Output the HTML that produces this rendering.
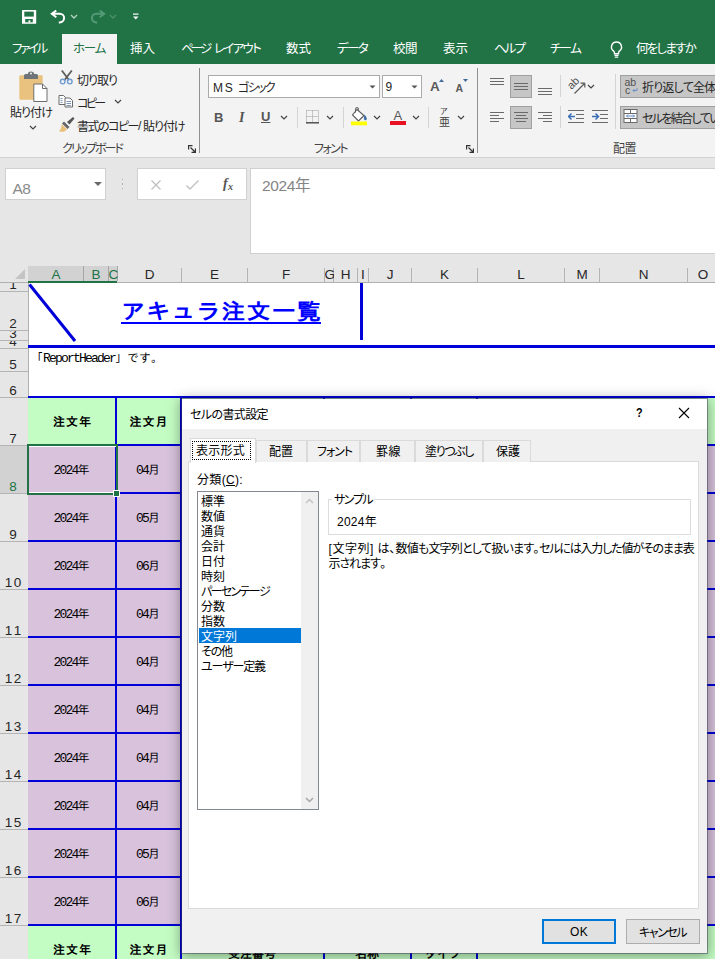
<!DOCTYPE html><html lang="ja"><head><meta charset="utf-8"><title>Excel</title><style>

html,body{margin:0;padding:0;background:#e6e6e6;}
#root{position:relative;width:715px;height:959px;overflow:hidden;font-family:"Liberation Sans","Noto Sans CJK JP",sans-serif;font-size:12px;}
#root div,#root span.t,#root svg{position:absolute;}
#root span.t{white-space:nowrap;line-height:1;font-kerning:none;font-feature-settings:"palt";}
#root span.m{font-family:"Liberation Mono","IPAGothic",monospace;font-feature-settings:normal;}
#root span.d{font-size:13px;letter-spacing:-1.800px;line-height:0;}
#root span.s{font-family:"Liberation Serif","Noto Serif CJK SC",serif;font-feature-settings:normal;}

</style></head><body><div id="root">
<div style="left:0px;top:0px;width:715px;height:64px;background:#217346;"></div>
<div style="left:62px;top:34px;width:55px;height:30px;background:#f3f3f3;"></div>
<div style="left:0px;top:64px;width:715px;height:93px;background:#f3f3f3;"></div>
<div style="left:0px;top:157px;width:715px;height:1px;background:#d2d2d2;"></div>
<span class="t" style="left:12px;top:43.2px;font-size:12.5px;color:#ffffff;letter-spacing:-2.32px;">ファイル</span>
<span class="t" style="left:130px;top:43.2px;font-size:12.5px;color:#ffffff;letter-spacing:-0.01px;">挿入</span>
<span class="t" style="left:181px;top:43.2px;font-size:12.5px;color:#ffffff;letter-spacing:-3.09px;">ページ</span>
<span class="t" style="left:214px;top:43.2px;font-size:12.5px;color:#ffffff;letter-spacing:-1.71px;">レイアウト</span>
<span class="t" style="left:286px;top:43.2px;font-size:12.5px;color:#ffffff;letter-spacing:-0.01px;">数式</span>
<span class="t" style="left:337px;top:43.2px;font-size:12.5px;color:#ffffff;letter-spacing:-1.65px;">データ</span>
<span class="t" style="left:393px;top:43.2px;font-size:12.5px;color:#ffffff;letter-spacing:-0.51px;">校閲</span>
<span class="t" style="left:443px;top:43.2px;font-size:12.5px;color:#ffffff;letter-spacing:-0.01px;">表示</span>
<span class="t" style="left:494px;top:43.2px;font-size:12.5px;color:#ffffff;letter-spacing:-1.96px;">ヘルプ</span>
<span class="t" style="left:550px;top:43.2px;font-size:12.5px;color:#ffffff;letter-spacing:-1.82px;">チーム</span>
<span class="t" style="left:636px;top:43.2px;font-size:12.5px;color:#ffffff;letter-spacing:-1.76px;">何をしますか</span>
<span class="t" style="left:73px;top:43.2px;font-size:12.5px;color:#217346;letter-spacing:-1.38px;">ホーム</span>
<svg style="left:608px;top:40px" width="17" height="19" viewBox="0 0 17 19"><path d="M8.500 2a5 5 0 0 0-2.900 9.100c.6.600.9 1.200.9 2v.600h4v-.600c0-.800.300-1.400.9-2A5 5 0 0 0 8.500 2z" fill="none" stroke="#fff" stroke-width="1.400"/><path d="M6.500 15.300h4M6.800 17.200h3.400" stroke="#fff" stroke-width="1.300"/></svg>
<svg style="left:21px;top:9px" width="16" height="16" viewBox="0 0 16 16"><rect x="1" y="1" width="14.200" height="13.800" rx="0.600" fill="#fff"/><rect x="3.300" y="2.600" width="9.500" height="5" fill="#217346"/><rect x="4.200" y="10" width="7.600" height="3.300" fill="#217346"/><rect x="7.500" y="11.300" width="1.800" height="2" fill="#fff"/></svg>
<svg style="left:50px;top:9px" width="17" height="16" viewBox="0 0 17 16"><path d="M6.300 1.500L1.800 4.800l4.500 3.400M2 4.800h7.800a4.300 4.300 0 0 1 0 8.600H8.800" fill="none" stroke="#fff" stroke-width="2"/></svg>
<svg style="left:70px;top:14px" width="8" height="6" viewBox="0 0 8 6"><path d="M1 1l3 3 3-3" fill="none" stroke="#b8d4c3" stroke-width="1.300"/></svg>
<svg style="left:89px;top:9px" width="17" height="16" viewBox="0 0 17 16"><g transform="translate(17,0) scale(-1,1)"><path d="M6.300 1.500L1.800 4.800l4.500 3.400M2 4.800h7.800a4.300 4.300 0 0 1 0 8.600H8.800" fill="none" stroke="#559a77" stroke-width="2"/></g></svg>
<svg style="left:109px;top:14px" width="8" height="6" viewBox="0 0 8 6"><path d="M1 1l3 3 3-3" fill="none" stroke="#4f8f6c" stroke-width="1.300"/></svg>
<svg style="left:132px;top:13px" width="8" height="8" viewBox="0 0 8 8"><path d="M1 1.100h5.500" stroke="#fff" stroke-width="1.200"/><path d="M1 3.600h5.500l-2.750 3z" fill="#fff"/></svg>
<div style="left:0px;top:158px;width:715px;height:108px;background:#e6e6e6;"></div>
<div style="left:5px;top:168px;width:101px;height:32px;background:#ffffff;box-sizing:border-box;border:1px solid #d0d0d0;"></div>
<span class="t" style="left:12.5px;top:180.8px;font-size:15.5px;color:#8a8a8a;letter-spacing:-0.48px;">A8</span>
<svg style="left:94px;top:182px" width="8" height="4" viewBox="0 0 8 4"><path d="M0 0h8l-4 4z" fill="#6a6a6a"/></svg>
<div style="left:121.5px;top:178.5px;width:1.5px;height:1.5px;background:#b0b0b0;"></div>
<div style="left:121.5px;top:183px;width:1.5px;height:1.5px;background:#b0b0b0;"></div>
<div style="left:121.5px;top:187.5px;width:1.5px;height:1.5px;background:#b0b0b0;"></div>
<div style="left:137px;top:168px;width:110px;height:32px;background:#ffffff;box-sizing:border-box;border:1px solid #d0d0d0;"></div>
<svg style="left:151px;top:180px" width="10" height="10" viewBox="0 0 10 10"><path d="M0.500 0.500l9 9M9.500 0.500l-9 9" stroke="#c0c0c0" stroke-width="1.300"/></svg>
<svg style="left:186px;top:180px" width="13" height="10" viewBox="0 0 13 10"><path d="M0.500 5.500l3.500 3.500L12.500 0.500" fill="none" stroke="#c0c0c0" stroke-width="1.400"/></svg>
<span class="t s" style="left:223px;top:177.0px;font-size:14px;color:#555;font-weight:700;"><i>f</i></span>
<span class="t s" style="left:228px;top:182.0px;font-size:10px;color:#555;font-weight:700;"><i>x</i></span>
<div style="left:250px;top:168px;width:466px;height:86px;background:#ffffff;box-sizing:border-box;border:1px solid #d0d0d0;"></div>
<span class="t" style="left:262px;top:177.8px;font-size:15.5px;color:#848484;letter-spacing:-0.40px;">2024年</span>
<div style="left:0px;top:266px;width:715px;height:17px;background:#e6e6e6;"></div>
<div style="left:28px;top:266px;width:89px;height:17px;background:#d2d2d2;"></div>
<div style="left:28px;top:281px;width:89px;height:2px;background:#217346;"></div>
<div style="left:0px;top:282px;width:28px;height:1px;background:#b0b0b0;"></div>
<div style="left:117px;top:282px;width:598px;height:1px;background:#b0b0b0;"></div>
<svg style="left:15px;top:269px" width="10" height="10" viewBox="0 0 10 10"><path d="M10 0v10H0z" fill="#c4c4c4"/></svg>
<div style="left:83px;top:266px;width:1px;height:15px;background:#a6a6a6;"></div>
<span class="t" style="left:28.5px;top:268.2px;font-size:13.5px;color:#217346;width:55px;text-align:center;overflow:hidden;">A</span>
<div style="left:108px;top:266px;width:1px;height:15px;background:#a6a6a6;"></div>
<span class="t" style="left:83.5px;top:268.2px;font-size:13.5px;color:#217346;width:25px;text-align:center;overflow:hidden;">B</span>
<div style="left:117px;top:266px;width:1px;height:15px;background:#a6a6a6;"></div>
<span class="t" style="left:108.5px;top:268.2px;font-size:13.5px;color:#217346;width:9px;text-align:center;overflow:hidden;">C</span>
<div style="left:181px;top:268px;width:1px;height:14px;background:#b4b4b4;"></div>
<span class="t" style="left:117.5px;top:268.2px;font-size:13.5px;color:#262626;width:64px;text-align:center;overflow:hidden;">D</span>
<div style="left:247px;top:268px;width:1px;height:14px;background:#b4b4b4;"></div>
<span class="t" style="left:181.5px;top:268.2px;font-size:13.5px;color:#262626;width:66px;text-align:center;overflow:hidden;">E</span>
<div style="left:324px;top:268px;width:1px;height:14px;background:#b4b4b4;"></div>
<span class="t" style="left:247.5px;top:268.2px;font-size:13.5px;color:#262626;width:77px;text-align:center;overflow:hidden;">F</span>
<div style="left:333px;top:268px;width:1px;height:14px;background:#b4b4b4;"></div>
<span class="t" style="left:324.5px;top:268.2px;font-size:13.5px;color:#262626;width:9px;text-align:center;overflow:hidden;">G</span>
<div style="left:357px;top:268px;width:1px;height:14px;background:#b4b4b4;"></div>
<span class="t" style="left:333.5px;top:268.2px;font-size:13.5px;color:#262626;width:24px;text-align:center;overflow:hidden;">H</span>
<div style="left:368px;top:268px;width:1px;height:14px;background:#b4b4b4;"></div>
<span class="t" style="left:357.5px;top:268.2px;font-size:13.5px;color:#262626;width:11px;text-align:center;overflow:hidden;">I</span>
<div style="left:411px;top:268px;width:1px;height:14px;background:#b4b4b4;"></div>
<span class="t" style="left:368.5px;top:268.2px;font-size:13.5px;color:#262626;width:43px;text-align:center;overflow:hidden;">J</span>
<div style="left:477px;top:268px;width:1px;height:14px;background:#b4b4b4;"></div>
<span class="t" style="left:411.5px;top:268.2px;font-size:13.5px;color:#262626;width:66px;text-align:center;overflow:hidden;">K</span>
<div style="left:564px;top:268px;width:1px;height:14px;background:#b4b4b4;"></div>
<span class="t" style="left:477.5px;top:268.2px;font-size:13.5px;color:#262626;width:87px;text-align:center;overflow:hidden;">L</span>
<div style="left:599px;top:268px;width:1px;height:14px;background:#b4b4b4;"></div>
<span class="t" style="left:564.5px;top:268.2px;font-size:13.5px;color:#262626;width:35px;text-align:center;overflow:hidden;">M</span>
<div style="left:687px;top:268px;width:1px;height:14px;background:#b4b4b4;"></div>
<span class="t" style="left:599.5px;top:268.2px;font-size:13.5px;color:#262626;width:88px;text-align:center;overflow:hidden;">N</span>
<div style="left:718px;top:268px;width:1px;height:14px;background:#b4b4b4;"></div>
<span class="t" style="left:687.5px;top:268.2px;font-size:13.5px;color:#262626;width:31px;text-align:center;overflow:hidden;">O</span>
<svg style="left:17px;top:70px" width="32" height="36" viewBox="0 0 32 36">
<rect x="2.300" y="5.200" width="23.400" height="24.600" rx="1.200" fill="#e8c27e"/>
<path d="M7 9V5.500q0-1.500 1.500-1.500h2.200q.3-2.500 3.300-2.500t3.300 2.500h2.200q1.500 0 1.500 1.500V9z" fill="#6e7478"/><circle cx="14" cy="3.600" r="1" fill="#f3f3f3"/>
<path d="M16.800 14h8.700l4.500 4.500v13h-13.200z" fill="#fff" stroke="#6e6e6e" stroke-width="1"/><path d="M25.500 14v4.500h4.500" fill="none" stroke="#6e6e6e" stroke-width="1"/></svg>
<span class="t" style="left:10px;top:107.0px;font-size:12px;color:#262626;letter-spacing:-0.93px;">貼り付け</span>
<svg style="left:28.5px;top:125px" width="8" height="6" viewBox="0 0 8 6"><path d="M1 1l3 3 3-3" fill="none" stroke="#444" stroke-width="1.200"/></svg>
<svg style="left:58px;top:69px" width="18" height="17" viewBox="0 0 18 17"><path d="M3.800 1.500l7.200 9.500M13.800 1.500L6.600 11" stroke="#5c5c5c" stroke-width="1.800" fill="none"/><circle cx="4.700" cy="12.600" r="2.300" fill="none" stroke="#6f9bd1" stroke-width="1.400"/><circle cx="11.800" cy="12.600" r="2.300" fill="none" stroke="#6f9bd1" stroke-width="1.400"/></svg>
<span class="t" style="left:77px;top:74.5px;font-size:12px;color:#262626;letter-spacing:-0.99px;">切り取り</span>
<svg style="left:57px;top:93px" width="17" height="16" viewBox="0 0 17 16"><path d="M2 2.500h4.500l2 2v7h-6.500z" fill="#fff" stroke="#6a6a6a" stroke-width="1"/><path d="M3.500 5.500h2M3.500 7.500h2M3.500 9.500h2" stroke="#7f96b5" stroke-width="1"/><path d="M8 5h5l2.500 2.500v6.500h-7.500z" fill="#fff" stroke="#6a6a6a" stroke-width="1"/><path d="M9.500 8.500h4.500M9.500 10.500h4.500M9.500 12.500h4.500" stroke="#7f96b5" stroke-width="1"/></svg>
<span class="t" style="left:77px;top:97.5px;font-size:12px;color:#262626;letter-spacing:-2.64px;">コピー</span>
<svg style="left:113.5px;top:99px" width="8" height="6" viewBox="0 0 8 6"><path d="M1 1l3 3 3-3" fill="none" stroke="#444" stroke-width="1.200"/></svg>
<svg style="left:58px;top:116px" width="17" height="17" viewBox="0 0 17 17"><path d="M9 6l6-5 1.500 1.500-5 6z" fill="#555"/><path d="M6 5.500l5.500 5.500-2 2L4 7.500z" fill="#666"/><path d="M3.500 8l5.500 5.500c-2 2.500-5.500 3-8 1.500 2-1.500 2.500-4 2.500-7z" fill="#e9c17a"/></svg>
<span class="t" style="left:77px;top:120.5px;font-size:12px;color:#262626;letter-spacing:-1.49px;">書式のコピー</span>
<span class="t" style="left:138px;top:119.5px;font-size:12px;color:#262626;">/</span>
<span class="t" style="left:143px;top:120.5px;font-size:12px;color:#262626;letter-spacing:-1.05px;">貼り付け</span>
<span class="t" style="left:62px;top:143.0px;font-size:12px;color:#444;letter-spacing:-2.00px;">クリップボード</span>
<svg style="left:188px;top:145px" width="8" height="8" viewBox="0 0 8 8"><path d="M0.600 4.500V0.600H4.500M2.500 2.500l4.500 4.500M7.400 3.500v3.900H3.500" fill="none" stroke="#333" stroke-width="1.200"/></svg>
<div style="left:199px;top:68px;width:1px;height:85px;background:#909090;"></div>
<div style="left:208px;top:75px;width:172px;height:23px;background:#fff;box-sizing:border-box;border:1px solid #ababab;"></div>
<span class="t" style="left:213px;top:81.5px;font-size:12px;color:#262626;letter-spacing:-0.78px;">M S</span>
<span class="t" style="left:238px;top:82.0px;font-size:12px;color:#262626;letter-spacing:-1.64px;">ゴシック</span>
<svg style="left:369px;top:85px" width="7" height="4" viewBox="0 0 7 4"><path d="M0.500 0.500h6l-3 3z" fill="#555"/></svg>
<div style="left:382px;top:75px;width:40px;height:23px;background:#fff;box-sizing:border-box;border:1px solid #ababab;"></div>
<span class="t" style="left:385.5px;top:81.0px;font-size:12px;color:#262626;">9</span>
<svg style="left:411px;top:85px" width="7" height="4" viewBox="0 0 7 4"><path d="M0.500 0.500h6l-3 3z" fill="#555"/></svg>
<span class="t" style="left:430px;top:80.2px;font-size:13.5px;color:#5a5a5a;font-weight:700;">A</span>
<svg style="left:439px;top:79px" width="5" height="3" viewBox="0 0 5 3"><path d="M0 3h5l-2.500-3z" fill="#41699c"/></svg>
<span class="t" style="left:455.5px;top:82.8px;font-size:10.5px;color:#5a5a5a;font-weight:700;">A</span>
<svg style="left:462.500px;top:79px" width="5" height="3" viewBox="0 0 5 3"><path d="M0 0h5l-2.500 3z" fill="#41699c"/></svg>
<span class="t" style="left:214px;top:110.5px;font-size:13px;color:#555;font-weight:700;">B</span>
<span class="t s" style="left:239px;top:111.0px;font-size:14px;color:#555;font-weight:700;"><i>I</i></span>
<span class="t" style="left:261px;top:110.0px;font-size:13px;color:#555;font-weight:700;text-decoration:underline;">U</span>
<svg style="left:280px;top:115px" width="8" height="6" viewBox="0 0 8 6"><path d="M1 1l3 3 3-3" fill="none" stroke="#444" stroke-width="1.200"/></svg>
<div style="left:297px;top:107px;width:1px;height:21px;background:#d4d4d4;"></div>
<svg style="left:306px;top:110px" width="13" height="14" viewBox="0 0 13 14"><path d="M0.500 0.500h12M0.500 0.500v12M12.500 0.500v12M6.500 0.500v12M0.500 6.500h12" stroke="#9a9a9a" stroke-width="1" stroke-dasharray="1 1" fill="none"/><path d="M0 12.800h13" stroke="#444" stroke-width="1.400"/></svg>
<svg style="left:326px;top:115px" width="8" height="6" viewBox="0 0 8 6"><path d="M1 1l3 3 3-3" fill="none" stroke="#444" stroke-width="1.200"/></svg>
<div style="left:343px;top:107px;width:1px;height:21px;background:#d4d4d4;"></div>
<svg style="left:350px;top:105.500px" width="20" height="20" viewBox="0 0 20 20"><path d="M7 3.500l7 6-5.500 5.500-6-6z" fill="#fff" stroke="#5a5a5a" stroke-width="1.100"/><path d="M5.500 6.500V3.300q0-1.800 1.500-1.800t1.500 1.800v1.500" fill="none" stroke="#5a5a5a" stroke-width="1"/><path d="M14.500 8.500c2 2.500 3 4.500 1.800 5.500s-3-.5-2.300-3z" fill="#3b6ea5"/><rect x="1" y="15.500" width="16" height="3.800" fill="#ffff00"/></svg>
<svg style="left:373px;top:115px" width="8" height="6" viewBox="0 0 8 6"><path d="M1 1l3 3 3-3" fill="none" stroke="#444" stroke-width="1.200"/></svg>
<span class="t" style="left:393.5px;top:108.5px;font-size:13px;color:#555;">A</span>
<div style="left:390px;top:121px;width:16px;height:4px;background:#e81123;"></div>
<svg style="left:412px;top:115px" width="8" height="6" viewBox="0 0 8 6"><path d="M1 1l3 3 3-3" fill="none" stroke="#444" stroke-width="1.200"/></svg>
<div style="left:428px;top:107px;width:1px;height:21px;background:#d4d4d4;"></div>
<span class="t" style="left:440px;top:108.0px;font-size:8px;color:#444;">ア</span>
<span class="t" style="left:439px;top:116.5px;font-size:11px;color:#444;">亜</span>
<svg style="left:457px;top:115px" width="8" height="6" viewBox="0 0 8 6"><path d="M1 1l3 3 3-3" fill="none" stroke="#444" stroke-width="1.200"/></svg>
<span class="t" style="left:314px;top:143.0px;font-size:12px;color:#444;letter-spacing:-1.57px;">フォント</span>
<svg style="left:466px;top:145px" width="8" height="8" viewBox="0 0 8 8"><path d="M0.600 4.500V0.600H4.500M2.500 2.500l4.500 4.500M7.400 3.500v3.900H3.500" fill="none" stroke="#333" stroke-width="1.200"/></svg>
<div style="left:477px;top:68px;width:1px;height:85px;background:#909090;"></div>
<div style="left:490px;top:78px;width:14px;height:1px;background:#6a6a6a;"></div>
<div style="left:490px;top:81px;width:14px;height:1px;background:#6a6a6a;"></div>
<div style="left:490px;top:84px;width:14px;height:1px;background:#6a6a6a;"></div>
<div style="left:510px;top:75px;width:22px;height:23px;background:#c6c6c6;box-sizing:border-box;border:1px solid #a0a0a0;"></div>
<div style="left:514px;top:83px;width:14px;height:1px;background:#6a6a6a;"></div>
<div style="left:514px;top:86px;width:14px;height:1px;background:#6a6a6a;"></div>
<div style="left:514px;top:89px;width:14px;height:1px;background:#6a6a6a;"></div>
<div style="left:538px;top:88px;width:14px;height:1px;background:#6a6a6a;"></div>
<div style="left:538px;top:91px;width:14px;height:1px;background:#6a6a6a;"></div>
<div style="left:538px;top:94px;width:14px;height:1px;background:#6a6a6a;"></div>
<div style="left:560px;top:75px;width:1px;height:22px;background:#d4d4d4;"></div>
<svg style="left:565px;top:74px" width="24" height="24" viewBox="0 0 24 24"><text x="0" y="0" transform="translate(6.500,16) rotate(-45)" font-family="Liberation Sans,sans-serif" font-size="11" fill="#505050">ab</text><path d="M9.500 19.500L19.500 9.500M19.800 9.200h-4.300M19.800 9.200v4.300" stroke="#5a5a5a" stroke-width="1.200" fill="none"/></svg>
<svg style="left:587px;top:84px" width="8" height="6" viewBox="0 0 8 6"><path d="M1 1l3 3 3-3" fill="none" stroke="#444" stroke-width="1.200"/></svg>
<div style="left:490px;top:112px;width:14px;height:1px;background:#6a6a6a;"></div>
<div style="left:490px;top:115px;width:9px;height:1px;background:#6a6a6a;"></div>
<div style="left:490px;top:118px;width:14px;height:1px;background:#6a6a6a;"></div>
<div style="left:490px;top:121px;width:9px;height:1px;background:#6a6a6a;"></div>
<div style="left:510px;top:106px;width:22px;height:23px;background:#c6c6c6;box-sizing:border-box;border:1px solid #a0a0a0;"></div>
<div style="left:514px;top:112px;width:14px;height:1px;background:#6a6a6a;"></div>
<div style="left:516px;top:115px;width:10px;height:1px;background:#6a6a6a;"></div>
<div style="left:514px;top:118px;width:14px;height:1px;background:#6a6a6a;"></div>
<div style="left:516px;top:121px;width:10px;height:1px;background:#6a6a6a;"></div>
<div style="left:538px;top:112px;width:14px;height:1px;background:#6a6a6a;"></div>
<div style="left:543px;top:115px;width:9px;height:1px;background:#6a6a6a;"></div>
<div style="left:538px;top:118px;width:14px;height:1px;background:#6a6a6a;"></div>
<div style="left:543px;top:121px;width:9px;height:1px;background:#6a6a6a;"></div>
<div style="left:560px;top:106px;width:1px;height:22px;background:#d4d4d4;"></div>
<svg style="left:568px;top:110px" width="16" height="14" viewBox="0 0 16 14"><path d="M0 0.500h16M8 4.500h8M8 8.500h8M0 12.500h16" stroke="#6a6a6a" stroke-width="1"/><path d="M7 6.500h-6M3.500 3.500l-3 3 3 3" stroke="#3b6fb5" stroke-width="1.500" fill="none"/></svg>
<svg style="left:592px;top:110px" width="16" height="14" viewBox="0 0 16 14"><path d="M0 0.500h16M8 4.500h8M8 8.500h8M0 12.500h16" stroke="#6a6a6a" stroke-width="1"/><path d="M0 6.500h6M3.500 3.500l3 3-3 3" stroke="#3b6fb5" stroke-width="1.500" fill="none"/></svg>
<div style="left:615px;top:74px;width:1px;height:55px;background:#d4d4d4;"></div>
<div style="left:620px;top:75px;width:100px;height:23px;background:#c6c6c6;box-sizing:border-box;border:1px solid #a0a0a0;"></div>
<span class="t" style="left:624.5px;top:77.2px;font-size:10.5px;color:#505050;">ab</span>
<span class="t" style="left:625px;top:84.8px;font-size:10.5px;color:#505050;">c</span>
<svg style="left:632px;top:87px" width="6" height="6" viewBox="0 0 6 6"><path d="M5 1v2.500H1M2.500 2L1 3.500 2.500 5" stroke="#5f8bc4" stroke-width="0.900" fill="none"/></svg>
<span class="t" style="left:642px;top:82.0px;font-size:12px;color:#262626;letter-spacing:-0.81px;">折り返して全体</span>
<div style="left:620px;top:106px;width:100px;height:23px;background:#c6c6c6;box-sizing:border-box;border:1px solid #a0a0a0;"></div>
<svg style="left:623px;top:109px" width="15" height="15" viewBox="0 0 15 15"><rect x="1" y="0.500" width="13" height="13" fill="#fff" stroke="#6a6a6a"/><path d="M1 4.500h13M1 9.500h13M7.500 0.500v4M7.500 9.500v4" stroke="#6a6a6a" stroke-width="1"/><path d="M3.500 7h8M5 5.500L3.500 7 5 8.500M10 5.500L11.500 7 10 8.500" stroke="#5f8bc4" stroke-width="1" fill="none"/></svg>
<span class="t" style="left:642px;top:113.0px;font-size:12px;color:#262626;letter-spacing:-1.66px;">セルを結合してい</span>
<span class="t" style="left:613px;top:143.0px;font-size:12px;color:#444;letter-spacing:-0.51px;">配置</span>
<div style="left:0px;top:283px;width:28px;height:676px;background:#e6e6e6;"></div>
<div style="left:28px;top:283px;width:687px;height:676px;background:#ffffff;"></div>
<div style="left:0px;top:291px;width:28px;height:1px;background:#b4b4b4;"></div>
<div style="left:0;top:283px;width:28px;height:8px;overflow:hidden;"><span class="t" style="left:0;width:26px;text-align:center;top:-5.5px;font-size:13.500px;color:#262626;">1</span></div>
<div style="left:0px;top:330px;width:28px;height:1px;background:#b4b4b4;"></div>
<div style="left:0;top:292px;width:28px;height:38px;overflow:hidden;"><span class="t" style="left:0;width:26px;text-align:center;top:24.5px;font-size:13.500px;color:#262626;">2</span></div>
<div style="left:0px;top:340px;width:28px;height:1px;background:#b4b4b4;"></div>
<div style="left:0;top:331px;width:28px;height:9px;overflow:hidden;"><span class="t" style="left:0;width:26px;text-align:center;top:-4.5px;font-size:13.500px;color:#262626;">3</span></div>
<div style="left:0px;top:348px;width:28px;height:1px;background:#b4b4b4;"></div>
<div style="left:0;top:341px;width:28px;height:7px;overflow:hidden;"><span class="t" style="left:0;width:26px;text-align:center;top:-6.5px;font-size:13.500px;color:#262626;">4</span></div>
<div style="left:0px;top:371px;width:28px;height:1px;background:#b4b4b4;"></div>
<div style="left:0;top:349px;width:28px;height:22px;overflow:hidden;"><span class="t" style="left:0;width:26px;text-align:center;top:8.5px;font-size:13.500px;color:#262626;">5</span></div>
<div style="left:0px;top:397px;width:28px;height:1px;background:#b4b4b4;"></div>
<div style="left:0;top:372px;width:28px;height:25px;overflow:hidden;"><span class="t" style="left:0;width:26px;text-align:center;top:11.5px;font-size:13.500px;color:#262626;">6</span></div>
<div style="left:0px;top:445px;width:28px;height:1px;background:#b4b4b4;"></div>
<div style="left:0;top:398px;width:28px;height:47px;overflow:hidden;"><span class="t" style="left:0;width:26px;text-align:center;top:33.5px;font-size:13.500px;color:#262626;">7</span></div>
<div style="left:0px;top:446px;width:28px;height:48px;background:#d2d2d2;"></div>
<div style="left:0px;top:493px;width:28px;height:1px;background:#b4b4b4;"></div>
<div style="left:0;top:446px;width:28px;height:47px;overflow:hidden;"><span class="t" style="left:0;width:26px;text-align:center;top:33.5px;font-size:13.500px;color:#217346;">8</span></div>
<div style="left:0px;top:541px;width:28px;height:1px;background:#b4b4b4;"></div>
<div style="left:0;top:494px;width:28px;height:47px;overflow:hidden;"><span class="t" style="left:0;width:26px;text-align:center;top:33.5px;font-size:13.500px;color:#262626;">9</span></div>
<div style="left:0px;top:589px;width:28px;height:1px;background:#b4b4b4;"></div>
<div style="left:0;top:542px;width:28px;height:47px;overflow:hidden;"><span class="t" style="left:0;width:26px;text-align:center;top:33.5px;font-size:13.500px;color:#262626;letter-spacing:1.300px;text-indent:1.300px;">10</span></div>
<div style="left:0px;top:637px;width:28px;height:1px;background:#b4b4b4;"></div>
<div style="left:0;top:590px;width:28px;height:47px;overflow:hidden;"><span class="t" style="left:0;width:26px;text-align:center;top:33.5px;font-size:13.500px;color:#262626;letter-spacing:1.300px;text-indent:1.300px;">11</span></div>
<div style="left:0px;top:685px;width:28px;height:1px;background:#b4b4b4;"></div>
<div style="left:0;top:638px;width:28px;height:47px;overflow:hidden;"><span class="t" style="left:0;width:26px;text-align:center;top:33.5px;font-size:13.500px;color:#262626;letter-spacing:1.300px;text-indent:1.300px;">12</span></div>
<div style="left:0px;top:733px;width:28px;height:1px;background:#b4b4b4;"></div>
<div style="left:0;top:686px;width:28px;height:47px;overflow:hidden;"><span class="t" style="left:0;width:26px;text-align:center;top:33.5px;font-size:13.500px;color:#262626;letter-spacing:1.300px;text-indent:1.300px;">13</span></div>
<div style="left:0px;top:781px;width:28px;height:1px;background:#b4b4b4;"></div>
<div style="left:0;top:734px;width:28px;height:47px;overflow:hidden;"><span class="t" style="left:0;width:26px;text-align:center;top:33.5px;font-size:13.500px;color:#262626;letter-spacing:1.300px;text-indent:1.300px;">14</span></div>
<div style="left:0px;top:829px;width:28px;height:1px;background:#b4b4b4;"></div>
<div style="left:0;top:782px;width:28px;height:47px;overflow:hidden;"><span class="t" style="left:0;width:26px;text-align:center;top:33.5px;font-size:13.500px;color:#262626;letter-spacing:1.300px;text-indent:1.300px;">15</span></div>
<div style="left:0px;top:877px;width:28px;height:1px;background:#b4b4b4;"></div>
<div style="left:0;top:830px;width:28px;height:47px;overflow:hidden;"><span class="t" style="left:0;width:26px;text-align:center;top:33.5px;font-size:13.500px;color:#262626;letter-spacing:1.300px;text-indent:1.300px;">16</span></div>
<div style="left:0px;top:925px;width:28px;height:1px;background:#b4b4b4;"></div>
<div style="left:0;top:878px;width:28px;height:47px;overflow:hidden;"><span class="t" style="left:0;width:26px;text-align:center;top:33.5px;font-size:13.500px;color:#262626;letter-spacing:1.300px;text-indent:1.300px;">17</span></div>
<div style="left:0px;top:973px;width:28px;height:1px;background:#b4b4b4;"></div>
<div style="left:28px;top:283px;width:1px;height:676px;background:#b0b0b0;"></div>
<svg style="left:28px;top:283px" width="60" height="62" viewBox="0 0 60 62"><path d="M1.500 1.500L47 58" stroke="#0000d8" stroke-width="3"/></svg>
<div style="left:360px;top:283px;width:3px;height:57px;background:#0000d8;"></div>
<div style="left:28px;top:345px;width:687px;height:3px;background:#0000d8;"></div>
<span class="t m" style="left:121px;top:301.5px;font-size:24px;color:#0000ff;font-weight:700;letter-spacing:1.12px;transform:scaleY(0.9);transform-origin:50% 50%;">アキュラ注文一覧</span>
<div style="left:121px;top:322px;width:200px;height:2px;background:#0000ff;"></div>
<span class="t m" style="left:31px;top:352.5px;font-size:12px;color:#000;">「<span class="d">ReportHeader</span>」です。</span>
<div style="left:28px;top:396px;width:687px;height:2px;background:#0000d8;"></div>
<div style="left:28px;top:398px;width:687px;height:47px;background:#c4fdc4;"></div>
<div style="left:28px;top:926px;width:687px;height:47px;background:#c4fdc4;"></div>
<div style="left:28px;top:446px;width:687px;height:47px;background:#d8c2dc;"></div>
<div style="left:28px;top:444px;width:687px;height:2px;background:#0000d8;"></div>
<div style="left:28px;top:494px;width:687px;height:47px;background:#d8c2dc;"></div>
<div style="left:28px;top:492px;width:687px;height:2px;background:#0000d8;"></div>
<div style="left:28px;top:542px;width:687px;height:47px;background:#d8c2dc;"></div>
<div style="left:28px;top:540px;width:687px;height:2px;background:#0000d8;"></div>
<div style="left:28px;top:590px;width:687px;height:47px;background:#d8c2dc;"></div>
<div style="left:28px;top:588px;width:687px;height:2px;background:#0000d8;"></div>
<div style="left:28px;top:638px;width:687px;height:47px;background:#d8c2dc;"></div>
<div style="left:28px;top:636px;width:687px;height:2px;background:#0000d8;"></div>
<div style="left:28px;top:686px;width:687px;height:47px;background:#d8c2dc;"></div>
<div style="left:28px;top:684px;width:687px;height:2px;background:#0000d8;"></div>
<div style="left:28px;top:734px;width:687px;height:47px;background:#d8c2dc;"></div>
<div style="left:28px;top:732px;width:687px;height:2px;background:#0000d8;"></div>
<div style="left:28px;top:782px;width:687px;height:47px;background:#d8c2dc;"></div>
<div style="left:28px;top:780px;width:687px;height:2px;background:#0000d8;"></div>
<div style="left:28px;top:830px;width:687px;height:47px;background:#d8c2dc;"></div>
<div style="left:28px;top:828px;width:687px;height:2px;background:#0000d8;"></div>
<div style="left:28px;top:878px;width:687px;height:47px;background:#d8c2dc;"></div>
<div style="left:28px;top:876px;width:687px;height:2px;background:#0000d8;"></div>
<div style="left:28px;top:924px;width:687px;height:2px;background:#0000d8;"></div>
<div style="left:115px;top:397px;width:2px;height:600px;background:#0000d8;"></div>
<div style="left:180px;top:397px;width:2px;height:600px;background:#0000d8;"></div>
<div style="left:323px;top:397px;width:2px;height:600px;background:#0000d8;"></div>
<div style="left:410px;top:397px;width:2px;height:600px;background:#0000d8;"></div>
<div style="left:476px;top:397px;width:2px;height:600px;background:#0000d8;"></div>
<span class="t m" style="left:53px;top:416.5px;font-size:12px;color:#000;font-weight:700;letter-spacing:1.00px;">注文年</span>
<span class="t m" style="left:129.5px;top:416.5px;font-size:12px;color:#000;font-weight:700;letter-spacing:1.00px;">注文月</span>
<span class="t m" style="left:53px;top:944.5px;font-size:12px;color:#000;font-weight:700;letter-spacing:1.00px;">注文年</span>
<span class="t m" style="left:129.5px;top:944.5px;font-size:12px;color:#000;font-weight:700;letter-spacing:1.00px;">注文月</span>
<span class="t m" style="left:53.5px;top:464.5px;font-size:12px;color:#000;"><span class="d">2024</span>年</span>
<span class="t m" style="left:136px;top:464.5px;font-size:12px;color:#000;"><span class="d">04</span>月</span>
<span class="t m" style="left:53.5px;top:512.5px;font-size:12px;color:#000;"><span class="d">2024</span>年</span>
<span class="t m" style="left:136px;top:512.5px;font-size:12px;color:#000;"><span class="d">05</span>月</span>
<span class="t m" style="left:53.5px;top:560.5px;font-size:12px;color:#000;"><span class="d">2024</span>年</span>
<span class="t m" style="left:136px;top:560.5px;font-size:12px;color:#000;"><span class="d">06</span>月</span>
<span class="t m" style="left:53.5px;top:608.5px;font-size:12px;color:#000;"><span class="d">2024</span>年</span>
<span class="t m" style="left:136px;top:608.5px;font-size:12px;color:#000;"><span class="d">04</span>月</span>
<span class="t m" style="left:53.5px;top:656.5px;font-size:12px;color:#000;"><span class="d">2024</span>年</span>
<span class="t m" style="left:136px;top:656.5px;font-size:12px;color:#000;"><span class="d">04</span>月</span>
<span class="t m" style="left:53.5px;top:704.5px;font-size:12px;color:#000;"><span class="d">2024</span>年</span>
<span class="t m" style="left:136px;top:704.5px;font-size:12px;color:#000;"><span class="d">04</span>月</span>
<span class="t m" style="left:53.5px;top:752.5px;font-size:12px;color:#000;"><span class="d">2024</span>年</span>
<span class="t m" style="left:136px;top:752.5px;font-size:12px;color:#000;"><span class="d">04</span>月</span>
<span class="t m" style="left:53.5px;top:800.5px;font-size:12px;color:#000;"><span class="d">2024</span>年</span>
<span class="t m" style="left:136px;top:800.5px;font-size:12px;color:#000;"><span class="d">04</span>月</span>
<span class="t m" style="left:53.5px;top:848.5px;font-size:12px;color:#000;"><span class="d">2024</span>年</span>
<span class="t m" style="left:136px;top:848.5px;font-size:12px;color:#000;"><span class="d">05</span>月</span>
<span class="t m" style="left:53.5px;top:896.5px;font-size:12px;color:#000;"><span class="d">2024</span>年</span>
<span class="t m" style="left:136px;top:896.5px;font-size:12px;color:#000;"><span class="d">06</span>月</span>
<span class="t m" style="left:228px;top:949.0px;font-size:12px;color:#000;font-weight:700;">受注番号</span>
<span class="t m" style="left:355px;top:949.0px;font-size:12px;color:#000;font-weight:700;">名称</span>
<span class="t m" style="left:425px;top:949.0px;font-size:12px;color:#000;font-weight:700;">タイプ</span>
<div style="left:27px;top:444px;width:91px;height:51px;background:transparent;box-sizing:border-box;border:2px solid #217346;"></div>
<div style="left:29px;top:446px;width:87px;height:47px;background:transparent;box-sizing:border-box;border-top:1px solid #fff;border-bottom:1px solid #fff;"></div>
<div style="left:113px;top:490px;width:7px;height:7px;background:#fff;"></div>
<div style="left:114px;top:491px;width:5px;height:5px;background:#217346;"></div>
<div style="left:182px;top:399px;width:525px;height:554px;background:#f0f0f0;box-shadow:0 2px 12px 2px rgba(0,0,0,.35);outline:1px solid rgba(60,60,90,.5);"></div>
<div style="left:182px;top:399px;width:525px;height:30px;background:#ffffff;"></div>
<span class="t" style="left:190px;top:408.5px;font-size:12px;color:#000;letter-spacing:-0.60px;">セルの書式設定</span>
<span class="t" style="left:636px;top:406.2px;font-size:13.5px;color:#000;font-weight:700;transform:scaleX(.8);transform-origin:0 50%;">?</span>
<svg style="left:678px;top:407px" width="12" height="12" viewBox="0 0 12 12"><path d="M1 1l10 10M11 1l-10 10" stroke="#000" stroke-width="1.100"/></svg>
<div style="left:188px;top:461px;width:511px;height:448px;background:#ffffff;box-sizing:border-box;border:1px solid #dadada;"></div>
<div style="left:256px;top:440px;width:51px;height:22px;background:#f0f0f0;box-sizing:border-box;border:1px solid #dadada;border-bottom:none;"></div>
<span class="t" style="left:269px;top:446.0px;font-size:12px;color:#000;letter-spacing:-0.01px;">配置</span>
<div style="left:307px;top:440px;width:53px;height:22px;background:#f0f0f0;box-sizing:border-box;border:1px solid #dadada;border-bottom:none;"></div>
<span class="t" style="left:317px;top:446.0px;font-size:12px;color:#000;letter-spacing:-1.07px;">フォント</span>
<div style="left:360px;top:440px;width:55px;height:22px;background:#f0f0f0;box-sizing:border-box;border:1px solid #dadada;border-bottom:none;"></div>
<span class="t" style="left:376px;top:446.0px;font-size:12px;color:#000;letter-spacing:0.49px;">罫線</span>
<div style="left:415px;top:440px;width:68px;height:22px;background:#f0f0f0;box-sizing:border-box;border:1px solid #dadada;border-bottom:none;"></div>
<span class="t" style="left:425px;top:446.0px;font-size:12px;color:#000;letter-spacing:-1.37px;">塗りつぶし</span>
<div style="left:483px;top:440px;width:48px;height:22px;background:#f0f0f0;box-sizing:border-box;border:1px solid #dadada;border-bottom:none;"></div>
<span class="t" style="left:496px;top:446.0px;font-size:12px;color:#000;letter-spacing:-0.01px;">保護</span>
<div style="left:190px;top:438px;width:66px;height:25px;background:#ffffff;box-sizing:border-box;border:1px solid #dadada;border-bottom:none;"></div>
<div style="left:192px;top:441px;width:59px;height:19px;background:transparent;box-sizing:border-box;border:1px dotted #000;"></div>
<span class="t" style="left:196px;top:444.5px;font-size:12px;color:#000;letter-spacing:0.25px;">表示形式</span>
<span class="t" style="left:197px;top:473.5px;font-size:12px;color:#000;letter-spacing:0.33px;">分類(<u>C</u>):</span>
<div style="left:197px;top:491px;width:122px;height:319px;background:#ffffff;box-sizing:border-box;border:1px solid #828790;"></div>
<div style="left:301px;top:492px;width:17px;height:317px;background:#f0f0f0;"></div>
<svg style="left:305px;top:498px" width="9" height="6" viewBox="0 0 9 6"><path d="M1 5l3.500-3.500L8 5" fill="none" stroke="#c2c2c2" stroke-width="1.500"/></svg>
<svg style="left:305px;top:797px" width="9" height="6" viewBox="0 0 9 6"><path d="M1 1l3.500 3.500L8 1" fill="none" stroke="#a6a6a6" stroke-width="1.500"/></svg>
<span class="t" style="left:201px;top:495.5px;font-size:12px;color:#000;letter-spacing:-0.01px;">標準</span>
<span class="t" style="left:201px;top:510.5px;font-size:12px;color:#000;letter-spacing:-0.01px;">数値</span>
<span class="t" style="left:201px;top:525.5px;font-size:12px;color:#000;letter-spacing:-0.01px;">通貨</span>
<span class="t" style="left:201px;top:540.5px;font-size:12px;color:#000;letter-spacing:-0.01px;">会計</span>
<span class="t" style="left:201px;top:555.5px;font-size:12px;color:#000;letter-spacing:-0.01px;">日付</span>
<span class="t" style="left:201px;top:570.5px;font-size:12px;color:#000;letter-spacing:-0.01px;">時刻</span>
<span class="t" style="left:201px;top:585.5px;font-size:12px;color:#000;letter-spacing:-1.67px;">パーセンテージ</span>
<span class="t" style="left:201px;top:600.5px;font-size:12px;color:#000;letter-spacing:-0.01px;">分数</span>
<span class="t" style="left:201px;top:615.5px;font-size:12px;color:#000;letter-spacing:-0.01px;">指数</span>
<div style="left:199px;top:628px;width:102px;height:15px;background:#0078d7;"></div>
<span class="t" style="left:201px;top:630.5px;font-size:12px;color:#fff;letter-spacing:-0.01px;">文字列</span>
<span class="t" style="left:201px;top:645.5px;font-size:12px;color:#000;letter-spacing:-1.14px;">その他</span>
<span class="t" style="left:201px;top:660.5px;font-size:12px;color:#000;letter-spacing:-1.15px;">ユーザー定義</span>
<div style="left:328px;top:499px;width:363px;height:36px;background:transparent;box-sizing:border-box;border:1px solid #dcdcdc;"></div>
<div style="left:332px;top:492px;width:42px;height:14px;background:#ffffff;"></div>
<span class="t" style="left:334px;top:494.0px;font-size:12px;color:#000;letter-spacing:-1.56px;">サンプル</span>
<span class="t" style="left:337px;top:515.5px;font-size:12px;color:#000;letter-spacing:0.26px;">2024年</span>
<span class="t" style="left:328.5px;top:543.0px;font-size:12px;color:#000;letter-spacing:0.57px;">[文字列]</span>
<span class="t" style="left:377.5px;top:543.0px;font-size:12px;color:#000;letter-spacing:-0.26px;">は、</span>
<span class="t" style="left:395.5px;top:543.0px;font-size:12px;color:#000;letter-spacing:-0.81px;">数値も文字列として扱います。</span>
<span class="t" style="left:539px;top:543.0px;font-size:12px;color:#000;letter-spacing:-1.17px;">セルには入力した値がそのまま表</span>
<span class="t" style="left:328.5px;top:558.0px;font-size:12px;color:#000;letter-spacing:-1.02px;">示されます。</span>
<div style="left:542px;top:919px;width:74px;height:25px;background:#e1e1e1;box-sizing:border-box;border:2px solid #0078d7;"></div>
<span class="t" style="left:570px;top:926.0px;font-size:12px;color:#000;letter-spacing:0.33px;">OK</span>
<div style="left:626px;top:919px;width:74px;height:25px;background:#e1e1e1;box-sizing:border-box;border:1px solid #adadad;"></div>
<span class="t" style="left:639px;top:926.5px;font-size:12px;color:#000;letter-spacing:-1.48px;">キャンセル</span>
</div></body></html>
